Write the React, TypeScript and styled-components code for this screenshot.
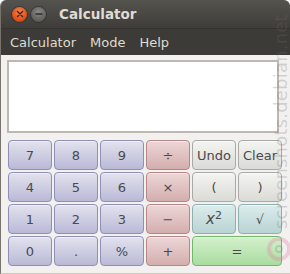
import React from 'react';
import styled, {createGlobalStyle} from "styled-components";

const GlobalStyle = createGlobalStyle`
    html, body {
        margin: 0;
        padding: 0;
        background: #ffffff;
    }
    body {
        font-family: 'DejaVu Sans', 'Liberation Sans', sans-serif;
    }
`

type Kind = 'num' | 'op' | 'misc' | 'fn' | 'eq';

const palette: Record<Kind, { top: string, bottom: string, border: string }> = {
    num: {top: '#e2e2ef', bottom: '#b9b9d6', border: '#8f8fb4'},
    op: {top: '#ecd6d6', bottom: '#d4aeae', border: '#b48888'},
    misc: {top: '#f4f4f2', bottom: '#dadad6', border: '#a9a9a5'},
    fn: {top: '#dcecec', bottom: '#b9d3d3', border: '#8eb0b0'},
    eq: {top: '#d4f0cc', bottom: '#a9dca0', border: '#72b86a'},
};

const keys: { label: React.ReactNode, kind: Kind, span?: number }[] = [
    {label: '7', kind: 'num'}, {label: '8', kind: 'num'}, {label: '9', kind: 'num'},
    {label: '÷', kind: 'op'}, {label: 'Undo', kind: 'misc'}, {label: 'Clear', kind: 'misc'},
    {label: '4', kind: 'num'}, {label: '5', kind: 'num'}, {label: '6', kind: 'num'},
    {label: '×', kind: 'op'}, {label: '(', kind: 'misc'}, {label: ')', kind: 'misc'},
    {label: '1', kind: 'num'}, {label: '2', kind: 'num'}, {label: '3', kind: 'num'},
    {label: '−', kind: 'op'}, {label: <i>x<sup>2</sup></i>, kind: 'fn'}, {label: '√', kind: 'fn'},
    {label: '0', kind: 'num'}, {label: '.', kind: 'num'}, {label: '%', kind: 'num'},
    {label: '+', kind: 'op'}, {label: '=', kind: 'eq', span: 2},
];

export default function App() {
    return (
        <>
            <GlobalStyle/>
            <Window>
                <TitleBar>
                    <WinButton $kind="close">
                        <svg width="8" height="8" viewBox="0 0 8 8">
                            <path d="M1.5 1.5 L6.5 6.5 M6.5 1.5 L1.5 6.5" stroke="#3a2010" strokeWidth="1.4" strokeLinecap="round"/>
                        </svg>
                    </WinButton>
                    <WinButton $kind="min">
                        <svg width="8" height="8" viewBox="0 0 8 8">
                            <path d="M1 4 L7 4" stroke="#2e2d2a" strokeWidth="1.4" strokeLinecap="round"/>
                        </svg>
                    </WinButton>
                    <Title>Calculator</Title>
                </TitleBar>
                <MenuBar>
                    <MenuItem>Calculator</MenuItem>
                    <MenuItem>Mode</MenuItem>
                    <MenuItem>Help</MenuItem>
                </MenuBar>
                <Body>
                    <Display/>
                    <Keypad>
                        {keys.map((k, i) => (
                            <Key key={i} $kind={k.kind} $span={k.span ?? 1}>{k.label}</Key>
                        ))}
                    </Keypad>
                </Body>
                <Watermark>screenshots.debian.net</Watermark>
                <WatermarkLogo>
                    <svg width="26" height="26" viewBox="0 0 26 26">
                        <circle cx="13" cy="13" r="10" fill="none" stroke="rgba(230,120,160,0.3)" strokeWidth="4"/>
                        <circle cx="13" cy="13" r="3" fill="none" stroke="rgba(120,120,120,0.3)" strokeWidth="1.5"/>
                    </svg>
                </WatermarkLogo>
            </Window>
        </>
    );
}

const Window = styled.div`
    position: relative;
    width: 290px;
    height: 274px;
    overflow: hidden;
    background: #f2f1f0;
    border-radius: 6px 6px 0 0;
    box-sizing: border-box;
    border-left: 1px solid #77746e;
    border-bottom: 1px solid #c9c5c0;
`

const TitleBar = styled.div`
    height: 28px;
    display: flex;
    align-items: center;
    padding-left: 11px;
    gap: 4px;
    background: linear-gradient(#55534e, #3e3d39);
`

const WinButton = styled.div<{ $kind: 'close' | 'min' }>`
    width: 15px;
    height: 15px;
    border-radius: 50%;
    display: flex;
    align-items: center;
    justify-content: center;
    background: ${p => p.$kind === 'close'
        ? 'radial-gradient(circle at 50% 35%, #f6854e, #dd4814 70%, #b83a0e)'
        : 'radial-gradient(circle at 50% 35%, #8a8984, #5e5d59 70%, #4a4945)'};
    box-shadow: 0 0 0 1px rgba(0, 0, 0, 0.25);
`

const Title = styled.span`
    margin-left: 9px;
    font-size: 13.5px;
    font-weight: bold;
    color: #dfdbd2;
`

const MenuBar = styled.div`
    height: 27px;
    display: flex;
    align-items: center;
    gap: 14px;
    padding-left: 9px;
    background: #3c3b37;
    border-top: 1px solid #34332f;
    box-sizing: border-box;
`

const MenuItem = styled.span`
    font-size: 13px;
    color: #dfdbd2;
`

const Body = styled.div`
    padding: 5px 0 0 6px;
    display: flex;
    flex-direction: column;
    gap: 7px;
`

const Display = styled.div`
    width: 272px;
    height: 73px;
    box-sizing: border-box;
    background: #ffffff;
    border: 2px solid #bdb8b2;
`

const Keypad = styled.div`
    margin-left: 1px;
    display: grid;
    grid-template-columns: repeat(6, 44px);
    grid-auto-rows: 30px;
    column-gap: 2px;
    row-gap: 2px;
`

const Key = styled.div<{ $kind: Kind, $span: number }>`
    grid-column: span ${p => p.$span};
    display: flex;
    align-items: center;
    justify-content: center;
    box-sizing: border-box;
    border-radius: 4px;
    border: 1px solid ${p => palette[p.$kind].border};
    background: linear-gradient(${p => palette[p.$kind].top}, ${p => palette[p.$kind].bottom});
    box-shadow: inset 0 1px 0 rgba(255, 255, 255, 0.5);
    font-size: 13px;
    color: #4a4a4a;

    i {
        font-size: 15px;
    }

    sup {
        font-size: 11px;
        font-style: normal;
        vertical-align: 5px;
        line-height: 0;
    }
`

const Watermark = styled.div`
    position: absolute;
    left: 270px;
    top: 229px;
    width: 212px;
    height: 20px;
    line-height: 20px;
    transform-origin: 0 0;
    transform: rotate(-90deg);
    font-size: 18px;
    letter-spacing: 0.2px;
    white-space: nowrap;
    color: rgba(110, 108, 104, 0.26);
`

const WatermarkLogo = styled.div`
    position: absolute;
    left: 265px;
    top: 236px;
    width: 26px;
    height: 26px;
`
